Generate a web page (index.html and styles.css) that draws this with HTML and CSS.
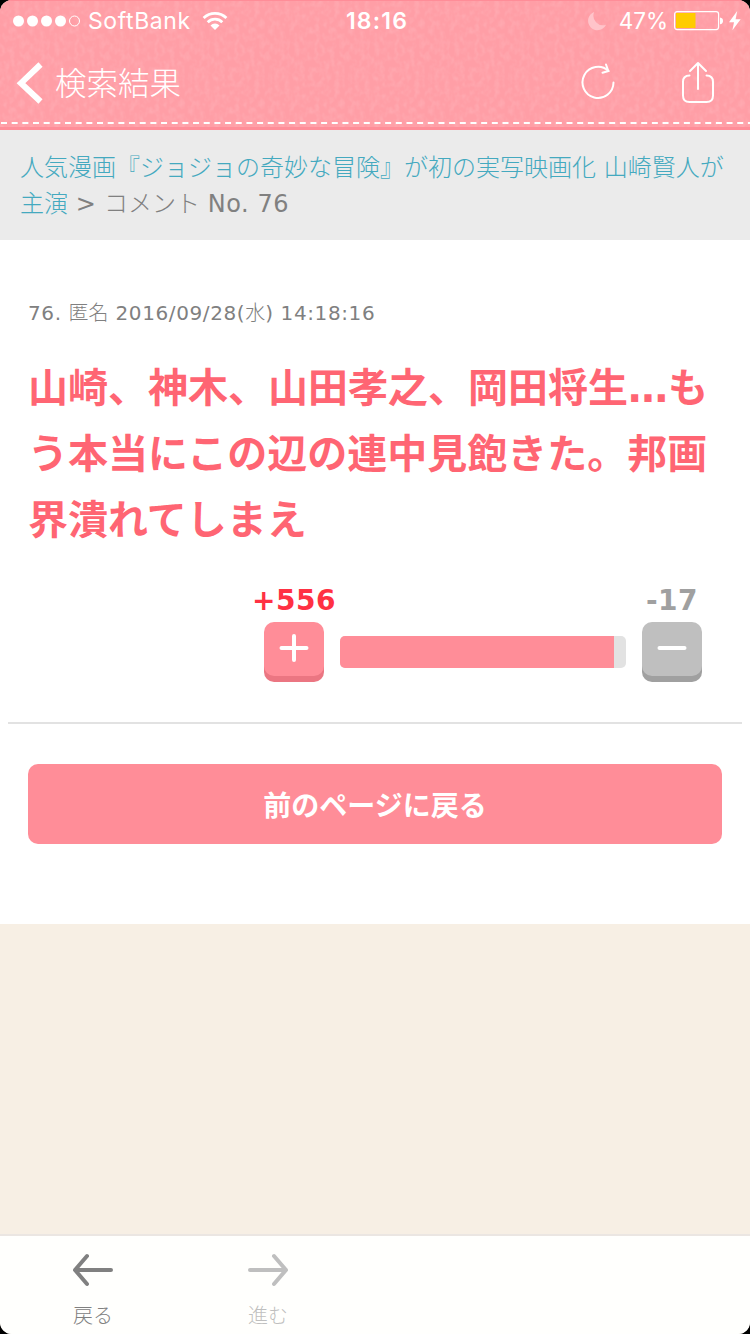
FILE: index.html
```html
<!DOCTYPE html>
<html lang="ja">
<head>
    <meta charset="UTF-8">
    <meta name="viewport" content="width=device-width, initial-scale=1.0">
    <title>コメント No. 76</title>
    <link rel="stylesheet" href="styles.css">
</head>
<body>
    <div class="screen">
        <header class="header">
            <div class="status-bar">
                <div class="status-left">
                    <svg class="signal" width="68" height="12" viewBox="0 0 68 12" fill="#fff">
                        <circle cx="5.5" cy="6" r="5.5"/>
                        <circle cx="19.5" cy="6" r="5.5"/>
                        <circle cx="33.5" cy="6" r="5.5"/>
                        <circle cx="47.5" cy="6" r="5.5"/>
                        <circle cx="61.5" cy="6" r="5" fill="none" stroke="#fff"/>
                    </svg>
                    <span class="carrier">SoftBank</span>
                    <svg class="wifi" width="26" height="20" viewBox="0 0 26 20" fill="none" stroke="#fff" stroke-width="2.8">
                        <path d="M1.6 7.1a16.2 16.2 0 0 1 22.8 0"/>
                        <path d="M5.7 11.2a10.4 10.4 0 0 1 14.6 0"/>
                        <path d="M13 19l-4.5-4.6a6.4 6.4 0 0 1 9 0z" fill="#fff" stroke="none"/>
                    </svg>
                </div>
                <span class="time">18:16</span>
                <div class="status-right">
                    <svg class="moon" width="20" height="20" viewBox="0 0 20 20">
                        <path d="M7.200 1A9.400 9.400 0 1 0 19 13.800A9.600 9.600 0 0 1 7.200 1z" fill="#ffc4ca"/>
                    </svg>
                    <span class="percent">47%</span>
                    <svg class="battery" width="50" height="20" viewBox="0 0 50 20">
                        <rect x=".6" y=".6" width="44" height="18" rx="2.5" fill="none" stroke="#fff" stroke-width="1.2"/>
                        <rect x="2" y="2" width="19.5" height="15" fill="#fc0"/>
                        <path d="M46 6.5q3 .5 3 3.4t-3 3.4z" fill="#fff"/>
                    </svg>
                    <svg class="bolt" width="12" height="20" viewBox="0 0 12 20">
                        <path d="M8.2 0L0 11.2h5L3.4 19.2L11.7 8.2H6.6z" fill="#fff"/>
                    </svg>
                </div>
            </div>
            <div class="nav-bar">
                <a class="nav-back">
                    <svg width="28" height="44" viewBox="0 0 28 44" fill="none" stroke="#fff" stroke-width="6">
                        <path d="M25.5 3.500L6 22.200L25.500 40.500"/>
                    </svg>
                    <span>検索結果</span>
                </a>
                <div class="nav-actions">
                    <svg width="36" height="42" viewBox="0 0 36 42" fill="none" stroke="#fff" stroke-width="2" stroke-linecap="round">
                        <path d="M32.500 20.500A15.500 15.500 0 1 1 27.500 9"/>
                        <path d="M25 2.500l2.300 6.500l-5.800 1.800"/>
                    </svg>
                    <svg width="36" height="44" viewBox="0 0 36 44" fill="none" stroke="#fff" stroke-width="2" stroke-linecap="round" stroke-linejoin="round">
                        <path d="M17 28V2M9 10l8-8l8 8"/>
                        <path d="M8.500 14.500q-6.500 0-6.500 6.500v13.500q0 6.500 6.500 6.500h17q6.500 0 6.500-6.500V21q0-6.500-6.500-6.500"/>
                    </svg>
                </div>
            </div>
            <svg class="stitch" width="750" height="2" viewBox="0 0 750 2">
                <path d="M0 1h750" stroke="#fff" stroke-width="2" stroke-dasharray="6 4.67" stroke-dashoffset="-1"/>
            </svg>
        </header>

        <div class="breadcrumb">
            <a>人気漫画『ジョジョの奇妙な冒険』が初の実写映画化 山崎賢人が主演</a> <span class="latin">&gt;</span> コメント <span class="latin">No. 76</span>
        </div>

        <main class="content">
            <article class="comment">
                <p class="comment-meta"><span class="latin">76. </span>匿名<span class="latin"> 2016/09/28(</span>水<span class="latin">) 14:18:16</span></p>
                <p class="comment-body">山崎、神木、山田孝之、岡田将生…もう本当にこの辺の連中見飽きた。邦画界潰れてしまえ</p>
                <div class="rating">
                    <div class="vote plus">
                        <span class="count">+556</span>
                        <button class="vote-btn">
                            <svg width="30" height="30" viewBox="0 0 30 30" stroke="#fff" stroke-width="4" stroke-linecap="round">
                                <path d="M2.500 15h25M15 3v24"/>
                            </svg>
                        </button>
                    </div>
                    <div class="bar"><div class="bar-fill" style="width: 274px"></div></div>
                    <div class="vote minus">
                        <span class="count">-17</span>
                        <button class="vote-btn">
                            <svg width="30" height="30" viewBox="0 0 30 30" stroke="#fff" stroke-width="4" stroke-linecap="round">
                                <path d="M2.500 15h25"/>
                            </svg>
                        </button>
                    </div>
                </div>
            </article>
            <a class="return-btn">前のページに戻る</a>
        </main>

        <footer class="toolbar">
            <div class="tool">
                <svg width="42" height="34" viewBox="0 0 42 34" fill="none" stroke="#808080" stroke-width="4" stroke-linecap="round" stroke-linejoin="round">
                    <path d="M39 17H3M15 3L3 17l12 14"/>
                </svg>
                <span>戻る</span>
            </div>
            <div class="tool disabled">
                <svg width="42" height="34" viewBox="0 0 42 34" fill="none" stroke="#bfbfbf" stroke-width="4" stroke-linecap="round" stroke-linejoin="round">
                    <path d="M3 17h36M27 3l12 14l-12 14"/>
                </svg>
                <span>進む</span>
            </div>
        </footer>
    </div>
</body>
</html>
```
FILE: styles.css
```css
body {
    margin: 0;
    background-color: #000;
    font-family: "DejaVu Sans", "Noto Sans CJK JP", sans-serif;
    color: #808080;
}
.screen {
    display: flex;
    flex-direction: column;
    width: 750px;
    height: 1334px;
    border-radius: 12px;
    overflow: hidden;
    background-color: #f7efe4;
}
.header {
    box-sizing: border-box;
    height: 130px;
    display: flex;
    flex-direction: column;
    color: #fff;
    background-color: #ff9ea6;
    background-image: url("data:image/svg+xml,%3Csvg xmlns='http://www.w3.org/2000/svg' width='80' height='80'%3E%3Cfilter id='f' x='0' y='0' width='100%25' height='100%25'%3E%3CfeTurbulence type='fractalNoise' baseFrequency='.2 .15' numOctaves='2' seed='4' stitchTiles='stitch'/%3E%3CfeColorMatrix values='0 0 0 0 1 0 0 0 0 .7 0 0 0 0 .73 2 0 0 0 -.8'/%3E%3C/filter%3E%3Crect width='80' height='80' filter='url(%23f)' opacity='.2'/%3E%3C/svg%3E");
    border-top: 1px solid #ff8d98;
    border-bottom: 3px solid #ff8d98;
}
.status-bar {
    display: grid;
    grid-template-columns: 1fr auto 1fr;
    align-items: center;
    height: 39px;
    padding: 0 9px 0 13px;
    font-family: Inter, sans-serif;
    font-size: 23px;
}
.status-left, .status-right {
    display: flex;
    align-items: center;
}
.status-right {
    justify-content: flex-end;
}
.carrier {
    margin-left: 7px;
    margin-right: 11px;
    letter-spacing: 0.6px;
}
.time {
    font-weight: 600;
    letter-spacing: 1.2px;
}
.percent {
    margin: 0 6px 0 12px;
    font-size: 22.5px;
}
.bolt {
    margin-left: 5px;
}
.nav-bar {
    display: flex;
    align-items: center;
    justify-content: space-between;
    height: 82px;
    padding: 3px 33px 0 15px;
    box-sizing: border-box;
}
.nav-back {
    display: flex;
    align-items: center;
    gap: 12px;
    font-family: "Noto Sans CJK JP", sans-serif;
    font-size: 31.5px;
    font-weight: 300;
}
.nav-back span {
    margin-top: -3px;
}
.nav-actions {
    display: flex;
    align-items: center;
    gap: 64px;
}
.stitch {
    display: block;
}
.breadcrumb {
    box-sizing: border-box;
    height: 110px;
    padding: 20px 20px 0;
    background-color: #ebebeb;
    font-size: 24px;
    line-height: 36px;
    font-weight: 300;
}
.breadcrumb a {
    color: #44a9bf;
}
.latin {
    font-weight: 400;
    letter-spacing: 0.6px;
}
.content {
    box-sizing: border-box;
    height: 684px;
    padding: 0 8px;
    background-color: #fff;
}
.comment {
    box-sizing: border-box;
    height: 484px;
    padding: 58px 20px 0;
    border-bottom: 2px solid #e2e2e2;
}
.comment-meta {
    margin: 0;
    font-size: 20px;
    line-height: 30px;
    font-weight: 300;
}
.comment-body {
    margin: 27px 0 0;
    font-size: 40px;
    line-height: 66px;
    font-weight: bold;
    color: #ff6573;
}
.rating {
    display: flex;
    align-items: flex-end;
    justify-content: flex-end;
    margin-top: 28px;
    padding-right: 20px;
}
.vote {
    display: flex;
    flex-direction: column;
    align-items: center;
    width: 60px;
}
.count {
    height: 41px;
    font-size: 28px;
    line-height: 40px;
    font-weight: bold;
    letter-spacing: 0.5px;
    white-space: nowrap;
}
.plus .count {
    color: #ff3143;
}
.minus .count {
    color: #a0a0a0;
}
.vote-btn {
    display: flex;
    justify-content: center;
    align-items: center;
    width: 60px;
    height: 54px;
    margin: 0 0 6px;
    padding: 0 1px 2px 0;
    border: none;
    border-radius: 10px;
    background-color: #ff8d98;
    box-shadow: 0 6px 0 #eb7682;
}
.minus .vote-btn {
    background-color: #bfbfbf;
    box-shadow: 0 6px 0 #a0a0a0;
}
.bar {
    width: 286px;
    height: 32px;
    margin: 0 16px 14px;
    border-radius: 5px;
    background-color: #e2e2e2;
    overflow: hidden;
}
.bar-fill {
    height: 100%;
    background-color: #ff8d98;
}
.return-btn {
    display: block;
    height: 80px;
    margin: 40px 20px 0;
    border-radius: 10px;
    background-color: #ff8d98;
    color: #fff;
    font-family: "Noto Sans CJK JP", sans-serif;
    font-size: 28px;
    line-height: 81px;
    font-weight: bold;
    text-align: center;
}
.toolbar {
    box-sizing: border-box;
    display: flex;
    gap: 75px;
    height: 100px;
    margin-top: auto;
    padding: 17px 0 0 43px;
    border-top: 2px solid #ebe6e2;
    background-color: #fffffd;
}
.tool {
    display: flex;
    flex-direction: column;
    align-items: center;
    width: 100px;
    font-family: "Noto Sans CJK JP", sans-serif;
    font-size: 20px;
    line-height: 30px;
    font-weight: 300;
}
.tool span {
    margin-top: 13px;
}
.disabled {
    color: #bfbfbf;
}
```
